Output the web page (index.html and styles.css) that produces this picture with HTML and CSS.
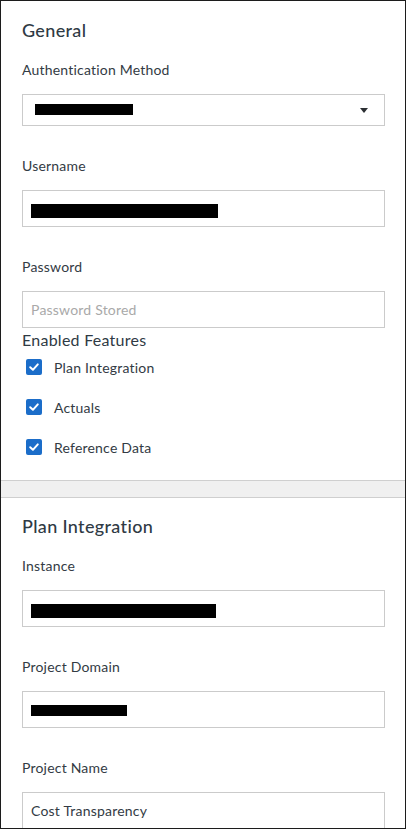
FILE: index.html
```html
<!DOCTYPE html>
<html>
<head>
<meta charset="utf-8">
<link rel="stylesheet" href="styles.css">
</head>
<body>
<div class="frame">
  <section class="section section-first">
    <h2 class="title">General</h2>
    <div class="field">
      <div class="label">Authentication Method</div>
      <div class="input select">
        <span class="redact" style="width:98px;height:11px"></span>
        <span class="caret"></span>
      </div>
    </div>
    <div class="field">
      <div class="label">Username</div>
      <div class="input"><span class="redact" style="width:187px;height:14px"></span></div>
    </div>
    <div class="field field-tight">
      <div class="label">Password</div>
      <div class="input text placeholder">Password Stored</div>
    </div>
    <div class="features-title">Enabled Features</div>
    <div class="check-row">
      <span class="checkbox"><svg width="16" height="16" viewBox="0 0 16 16"><path d="M4.2 8.3 L6.9 10.8 L11.8 5.4" fill="none" stroke="#fff" stroke-width="2" stroke-linecap="round" stroke-linejoin="round"/></svg></span>
      <span class="check-label">Plan Integration</span>
    </div>
    <div class="check-row">
      <span class="checkbox"><svg width="16" height="16" viewBox="0 0 16 16"><path d="M4.2 8.3 L6.9 10.8 L11.8 5.4" fill="none" stroke="#fff" stroke-width="2" stroke-linecap="round" stroke-linejoin="round"/></svg></span>
      <span class="check-label">Actuals</span>
    </div>
    <div class="check-row">
      <span class="checkbox"><svg width="16" height="16" viewBox="0 0 16 16"><path d="M4.2 8.3 L6.9 10.8 L11.8 5.4" fill="none" stroke="#fff" stroke-width="2" stroke-linecap="round" stroke-linejoin="round"/></svg></span>
      <span class="check-label">Reference Data</span>
    </div>
  </section>
  <div class="band"></div>
  <section class="section section-second">
    <h2 class="title">Plan Integration</h2>
    <div class="field">
      <div class="label">Instance</div>
      <div class="input"><span class="redact" style="width:185px;height:14px"></span></div>
    </div>
    <div class="field">
      <div class="label">Project Domain</div>
      <div class="input"><span class="redact" style="width:96px;height:11px"></span></div>
    </div>
    <div class="field">
      <div class="label">Project Name</div>
      <div class="input text">Cost Transparency</div>
    </div>
  </section>
</div>
</body>
</html>
```
FILE: styles.css
```css
html, body {
  margin: 0;
  padding: 0;
  background: #ffffff;
}
body {
  font-family: "Lato", "Open Sans", sans-serif;
  color: #333b44;
}
.frame {
  box-sizing: border-box;
  width: 406px;
  height: 829px;
  border: 1px solid #1c1c1c;
  overflow: hidden;
  background: #fff;
}
.section {
  padding: 0 20px 0 21px;
}
.section-first {
  padding-top: 17px;
  padding-bottom: 23px;
}
.section-second {
  padding-top: 16px;
}
.title {
  margin: 0 0 18px 0;
  font-size: 18px;
  line-height: 24px;
  font-weight: 500;
  letter-spacing: 0.35px;
  color: #2f3a44;
}
.field {
  margin-bottom: 30px;
}
.field-tight {
  margin-bottom: 1px;
}
.label {
  font-size: 14px;
  line-height: 20px;
  margin-bottom: 14px;
  letter-spacing: 0.2px;
  color: #333b44;
}
.input {
  box-sizing: border-box;
  height: 37px;
  border: 1px solid #cbcbcb;
  background: #fff;
  display: flex;
  align-items: flex-start;
  padding: 13px 8px 0 8px;
}
.input.text {
  padding-top: 8px;
  font-size: 14px;
  line-height: 20px;
  letter-spacing: 0.2px;
  color: #333b44;
}
.input.placeholder {
  color: #a9a9a9;
}
.select {
  height: 32px;
  padding: 9px 16px 0 12px;
  justify-content: space-between;
}
.redact {
  display: inline-block;
  background: #000;
}
.caret {
  align-self: center;
  margin-top: -8px;
  width: 0;
  height: 0;
  border-left: 4.5px solid transparent;
  border-right: 4.5px solid transparent;
  border-top: 5px solid #2b2f33;
}
.features-title {
  font-size: 16px;
  line-height: 22px;
  letter-spacing: 0.25px;
  color: #2f3a44;
  margin-bottom: 6px;
}
.check-row {
  display: flex;
  align-items: center;
  height: 20px;
  padding-left: 4px;
  margin-bottom: 20px;
}
.check-row:last-child {
  margin-bottom: 0;
}
.checkbox {
  width: 16px;
  height: 16px;
  border-radius: 2px;
  background: #1b6dc9;
  display: inline-flex;
}
.check-label {
  margin-left: 12px;
  padding-top: 2px;
  font-size: 14px;
  line-height: 20px;
  letter-spacing: 0.2px;
  color: #333b44;
}
.band {
  height: 16px;
  background: #f0f0f0;
  border-top: 1px solid #cfcfcf;
  border-bottom: 1px solid #cfcfcf;
}
```
